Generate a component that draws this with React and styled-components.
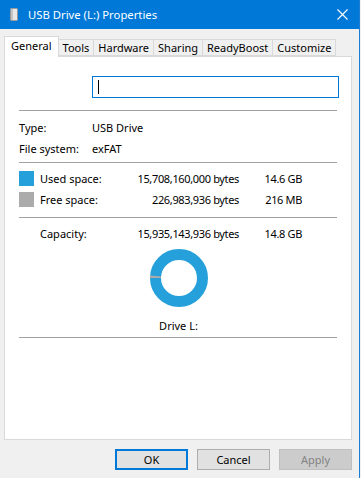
import React from 'react'
import styled, { createGlobalStyle } from 'styled-components'

const GlobalStyle = createGlobalStyle`
  html, body {
    margin: 0;
    padding: 0;
    background: #f0f0f0;
  }
  body {
    font-family: "Noto Sans", "Liberation Sans", sans-serif;
    font-size: 11px;
    color: #000;
  }
`

const tabs = ['General', 'Tools', 'Hardware', 'Sharing', 'ReadyBoost', 'Customize']

const usedBytes = 15708160000
const totalBytes = 15935143936

function Donut() {
  const cx = 30
  const cy = 30
  const r = 23.5
  const freeFrac = 1 - usedBytes / totalBytes
  const a0 = Math.PI
  const a1 = Math.PI + freeFrac * Math.PI * 2
  const p = (a) => `${cx + r * Math.cos(a)} ${cy + r * Math.sin(a)}`
  return (
    <svg width="60" height="60" viewBox="0 0 60 60">
      <circle cx={cx} cy={cy} r={r} fill="none" stroke="#26a0da" strokeWidth="11" />
      <path d={`M ${p(a0)} A ${r} ${r} 0 0 1 ${p(a1)}`} fill="none" stroke="#ababab" strokeWidth="11" />
    </svg>
  )
}

function App() {
  return (
    <Window>
      <GlobalStyle />
      <TitleBar>
        <svg width="8" height="13" viewBox="0 0 8 13">
          <rect x="0.5" y="0.5" width="7" height="12" rx="1" fill="#e8e8e8" stroke="#9a9a9a" />
          <rect x="1" y="1" width="2" height="11" fill="#c4c4c4" />
        </svg>
        <Title>USB Drive (L:) Properties</Title>
        <Close>
          <svg width="11" height="11" viewBox="0 0 11 11">
            <path d="M0.5 0.5 L10.5 10.5 M10.5 0.5 L0.5 10.5" stroke="#fff" strokeWidth="1.1" />
          </svg>
        </Close>
      </TitleBar>

      <TabStrip>
        {tabs.map((t, i) => (
          <Tab key={t} $active={i === 0}>{t}</Tab>
        ))}
      </TabStrip>

      <Panel>
        <NameRow>
          <NameInput>
            <Caret />
          </NameInput>
        </NameRow>
        <Separator $top={12} />

        <InfoRow $top={6}>
          <span>Type:</span>
          <span>USB Drive</span>
        </InfoRow>
        <InfoRow>
          <span>File system:</span>
          <span>exFAT</span>
        </InfoRow>
        <Separator $top={3} />

        <SpaceRow $top={5}>
          <Swatch $color="#26a0da" />
          <span>Used space:</span>
          <Num>15,708,160,000 bytes</Num>
          <Num>14.6 GB</Num>
        </SpaceRow>
        <SpaceRow>
          <Swatch $color="#ababab" />
          <span>Free space:</span>
          <Num>226,983,936 bytes</Num>
          <Num>216 MB</Num>
        </SpaceRow>
        <Separator $top={7} />

        <SpaceRow $top={5}>
          <span />
          <span>Capacity:</span>
          <Num>15,935,143,936 bytes</Num>
          <Num>14.8 GB</Num>
        </SpaceRow>

        <Chart>
          <Donut />
        </Chart>
        <DriveLabel>Drive L:</DriveLabel>
        <Separator $top={1} />
      </Panel>

      <ButtonRow>
        <Button $default>OK</Button>
        <Button>Cancel</Button>
        <Button disabled>Apply</Button>
      </ButtonRow>
    </Window>
  )
}

const Window = styled.div`
  width: 359px;
  height: 478px;
  border-right: 1px solid #1a7fd4;
  background: #f0f0f0;
  display: flex;
  flex-direction: column;
`

const TitleBar = styled.div`
  height: 29px;
  background: #0078d7;
  display: flex;
  align-items: center;
  padding-left: 10px;
  padding-bottom: 1px;
  box-sizing: border-box;
`

const Title = styled.span`
  color: #fff;
  font-size: 11.3px;
  margin-left: 10px;
  flex: 1;
`

const Close = styled.span`
  width: 32px;
  display: flex;
  justify-content: center;
  margin-right: 1px;
`

const TabStrip = styled.div`
  display: flex;
  align-items: flex-end;
  height: 20px;
  margin-top: 7px;
  padding-left: 4px;
  position: relative;
  z-index: 1;
`

const Tab = styled.div`
  box-sizing: border-box;
  height: ${(p) => (p.$active ? '21px' : '17px')};
  margin-bottom: ${(p) => (p.$active ? '-1px' : '0')};
  padding: ${(p) => (p.$active ? '0 6px 3px' : '0 4px')};
  background: ${(p) => (p.$active ? '#fff' : '#f0f0f0')};
  border: 1px solid #d9d9d9;
  border-bottom: ${(p) => (p.$active ? 'none' : '1px solid #d9d9d9')};
  margin-left: -1px;
  display: flex;
  align-items: center;
  white-space: nowrap;
  &:first-child {
    margin-left: 0;
  }
`

const Panel = styled.div`
  box-sizing: border-box;
  width: 348px;
  height: 384px;
  margin-left: 4px;
  background: #fff;
  border: 1px solid #d9d9d9;
  padding: 0 14px;
  display: flex;
  flex-direction: column;
`

const NameRow = styled.div`
  padding-top: 19px;
  padding-left: 73px;
`

const NameInput = styled.div`
  box-sizing: border-box;
  width: 247px;
  height: 22px;
  border: 1px solid #0078d7;
  padding: 3px 5px;
`

const Caret = styled.div`
  width: 1px;
  height: 14px;
  background: #000;
`

const Separator = styled.div`
  height: 1px;
  background: #a0a0a0;
  margin-top: ${(p) => p.$top || 0}px;
`

const InfoRow = styled.div`
  display: grid;
  grid-template-columns: 73px 1fr;
  height: 21px;
  align-items: center;
  margin-top: ${(p) => p.$top || 0}px;
`

const SpaceRow = styled.div`
  display: grid;
  grid-template-columns: 21px 86px 113px 63px;
  height: 21px;
  align-items: center;
  margin-top: ${(p) => p.$top || 0}px;
  white-space: nowrap;
`

const Swatch = styled.div`
  width: 15px;
  height: 15px;
  background: ${(p) => p.$color};
`

const Num = styled.span`
  text-align: right;
  letter-spacing: -0.35px;
`

const Chart = styled.div`
  display: flex;
  justify-content: center;
  margin-top: 4px;
  margin-left: 1px;
`

const DriveLabel = styled.div`
  text-align: center;
  height: 20px;
  line-height: 20px;
  margin-top: 8px;
  margin-left: 1px;
`

const ButtonRow = styled.div`
  display: flex;
  justify-content: flex-end;
  gap: 9px;
  margin-top: 9px;
  padding-right: 7px;
`

const Button = styled.button`
  box-sizing: border-box;
  width: 73px;
  height: 21px;
  font: inherit;
  color: #000;
  background: #e1e1e1;
  border: ${(p) => (p.$default ? '2px solid #0078d7' : '1px solid #adadad')};
  padding: 0;
  &:disabled {
    background: #cccccc;
    border-color: #bfbfbf;
    color: #838383;
  }
`

export default App
